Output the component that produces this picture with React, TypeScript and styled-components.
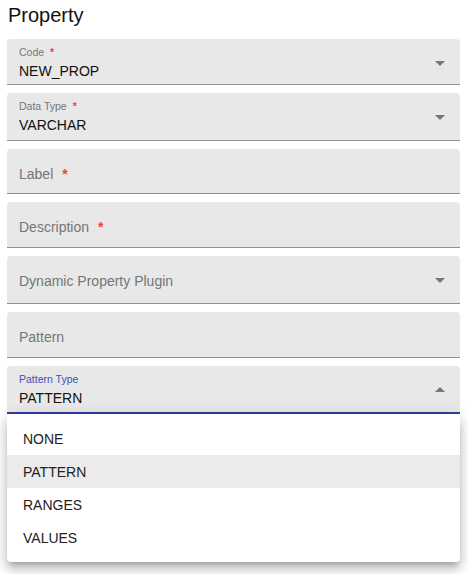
import React from "react";
import styled, { createGlobalStyle } from "styled-components";

const GlobalStyle = createGlobalStyle`
  html, body {
    margin: 0;
    padding: 0;
    background: #fff;
  }
  body {
    font-family: "Liberation Sans", Arial, sans-serif;
    color: rgba(0, 0, 0, 0.87);
  }
`;

const Page = styled.div`
  width: 468px;
  height: 574px;
  padding: 0 8px 0 7px;
  box-sizing: border-box;
  overflow: hidden;
`;

const Title = styled.h2`
  margin: 0 0 9px 1px;
  font-size: 20px;
  font-weight: 400;
  line-height: 30px;
  color: #111;
`;

const Fields = styled.div`
  display: flex;
  flex-direction: column;
  gap: 8px;
`;

const Field = styled.div<{ $h: number; $focused?: boolean }>`
  position: relative;
  display: flex;
  align-items: flex-start;
  height: ${(p) => p.$h}px;
  padding: 0 8px 0 12px;
  background: #e8e8e8;
  border-radius: 4px 4px 0 0;
  box-sizing: border-box;
  border-bottom: ${(p) =>
    p.$focused ? "2px solid #303f9f" : "1px solid #8f8f8f"};
`;

const Content = styled.div<{ $shrink?: boolean }>`
  flex: 1;
  display: flex;
  flex-direction: column;
  gap: 5px;
  padding-top: ${(p) => (p.$shrink ? 8 : 18)}px;
`;

const Label = styled.label<{ $shrink?: boolean; $focused?: boolean }>`
  font-size: ${(p) => (p.$shrink ? 10.5 : 14)}px;
  line-height: 1;
  color: ${(p) => (p.$focused ? "#3f51b5" : "#757575")};
  white-space: nowrap;
`;

const Asterisk = styled.span<{ $shrink?: boolean }>`
  color: #f44336;
  margin-left: ${(p) => (p.$shrink ? 6 : 9)}px;
  font-weight: 700;
`;

const Value = styled.div`
  font-size: 14px;
  line-height: 17px;
  color: #111;
`;

const Arrow = styled.svg<{ $open?: boolean }>`
  flex: none;
  margin-top: 12px;
  width: 24px;
  height: 24px;
  fill: #757575;
  transform: ${(p) => (p.$open ? "rotate(180deg)" : "none")};
`;

const Menu = styled.ul`
  position: absolute;
  top: calc(100% + 2px);
  left: 0;
  right: 0;
  margin: 0;
  padding: 8px 0;
  list-style: none;
  background: #fff;
  border-radius: 4px;
  z-index: 10;
  box-shadow: 0px 5px 5px -3px rgba(0, 0, 0, 0.2),
    0px 8px 10px 1px rgba(0, 0, 0, 0.14), 0px 3px 14px 2px rgba(0, 0, 0, 0.12);
`;

const MenuItem = styled.li<{ $selected?: boolean }>`
  height: 33px;
  display: flex;
  align-items: center;
  padding: 0 16px;
  font-size: 14px;
  color: #222;
  background: ${(p) => (p.$selected ? "#ebebeb" : "transparent")};
`;

const DropIcon = ({ open }: { open?: boolean }) => (
  <Arrow $open={open} viewBox="0 0 24 24">
    <path d="M7 10l5 5 5-5z" />
  </Arrow>
);

type FieldDef = {
  label: string;
  h: number;
  required?: boolean;
  value?: string;
  select?: boolean;
};

const fields: FieldDef[] = [
  { label: "Code", h: 46, required: true, value: "NEW_PROP", select: true },
  { label: "Data Type", h: 48, required: true, value: "VARCHAR", select: true },
  { label: "Label", h: 45, required: true },
  { label: "Description", h: 46, required: true },
  { label: "Dynamic Property Plugin", h: 48, select: true },
  { label: "Pattern", h: 46 },
];

const options = ["NONE", "PATTERN", "RANGES", "VALUES"];

export default function App() {
  return (
    <Page>
      <GlobalStyle />
      <Title>Property</Title>
      <Fields>
        {fields.map((f) => {
          const shrink = !!f.value;
          return (
            <Field key={f.label} $h={f.h}>
              <Content $shrink={shrink}>
                <Label $shrink={shrink}>
                  {f.label}
                  {f.required && <Asterisk $shrink={shrink}>*</Asterisk>}
                </Label>
                {f.value && <Value>{f.value}</Value>}
              </Content>
              {f.select && <DropIcon />}
            </Field>
          );
        })}
        <Field $h={48} $focused>
          <Content $shrink>
            <Label $shrink $focused>
              Pattern Type
            </Label>
            <Value>PATTERN</Value>
          </Content>
          <DropIcon open />
          <Menu>
            {options.map((o) => (
              <MenuItem key={o} $selected={o === "PATTERN"}>
                {o}
              </MenuItem>
            ))}
          </Menu>
        </Field>
      </Fields>
    </Page>
  );
}
